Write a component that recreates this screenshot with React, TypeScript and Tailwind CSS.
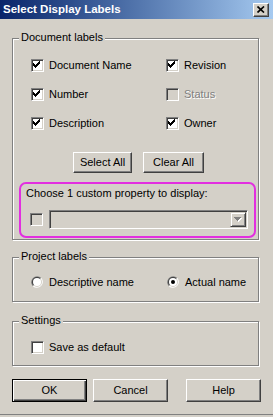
import type { ReactNode } from "react";

const face = "#d4d0c8";

function CheckMark() {
  return (
    <svg width="13" height="13" viewBox="0 0 13 13" className="absolute -left-[2px] -top-[2px]" shapeRendering="crispEdges">
      <path
        d="M3 5h1v3h-1z M4 6h1v3h-1z M5 7h1v3h-1z M6 6h1v3h-1z M7 5h1v3h-1z M8 4h1v3h-1z M9 3h1v3h-1z"
        fill="#000"
      />
    </svg>
  );
}

function Box({ checked, disabled }: { checked?: boolean; disabled?: boolean }) {
  return (
    <span
      className={`relative block w-[13px] h-[13px] shrink-0 border border-t-[#808080] border-l-[#808080] border-r-white border-b-white shadow-[inset_1px_1px_0_#404040,inset_-1px_-1px_0_#d4d0c8] ${
        disabled ? "bg-[#d4d0c8]" : "bg-white"
      }`}
    >
      {checked && <CheckMark />}
    </span>
  );
}

function Check({ label, checked, disabled }: { label: string; checked?: boolean; disabled?: boolean }) {
  return (
    <div className="flex items-center h-[13px] gap-[5px]">
      <Box checked={checked} disabled={disabled} />
      <span className={disabled ? "text-[#808080] [text-shadow:1px_1px_0_#fff]" : ""}>{label}</span>
    </div>
  );
}

function Radio({ label, checked }: { label: string; checked?: boolean }) {
  return (
    <div className="flex items-center h-[12px] gap-[6px]">
      <svg width="12" height="12" viewBox="0 0 12 12" className="shrink-0">
        <path d="M10.24 1.76A6 6 0 0 0 1.76 10.24Z" fill="#808080" />
        <path d="M10.24 1.76A6 6 0 0 1 1.76 10.24Z" fill="#fff" />
        <path d="M9.54 2.46A5 5 0 0 0 2.46 9.54Z" fill="#404040" />
        <path d="M9.54 2.46A5 5 0 0 1 2.46 9.54Z" fill={face} />
        <circle cx="6" cy="6" r="4" fill="#fff" />
        {checked && <circle cx="6" cy="6" r="2" fill="#000" />}
      </svg>
      <span>{label}</span>
    </div>
  );
}

function Group({ label, className, children }: { label: string; className: string; children: ReactNode }) {
  return (
    <div
      className={`relative ml-[12px] w-[247px] border border-[#808080] shadow-[inset_1px_1px_0_#fff,1px_1px_0_#fff] ${className}`}
    >
      <span className="absolute -top-[8px] left-[6px] bg-[#d4d0c8] px-[2px] leading-[13px]">{label}</span>
      {children}
    </div>
  );
}

function Btn({ label, className, isDefault }: { label: string; className: string; isDefault?: boolean }) {
  return (
    <button
      className={`flex items-center justify-center bg-[#d4d0c8] ${
        isDefault
          ? "border border-black shadow-[inset_1px_1px_0_#fff,inset_-1px_-1px_0_#404040,inset_-2px_-2px_0_#808080]"
          : "border border-t-white border-l-white border-r-[#404040] border-b-[#404040] shadow-[inset_-1px_-1px_0_#808080]"
      } ${className}`}
    >
      {label}
    </button>
  );
}

export default function App() {
  return (
    <div className="w-[273px] h-[417px] bg-[#d4d0c8] flex flex-col text-[11px] leading-[13px] text-black font-['Liberation_Sans',Arial,sans-serif] overflow-hidden">
      {/* title bar */}
      <div className="h-[19px] shrink-0 flex items-center pl-[3px] pr-[4px] bg-gradient-to-r from-[#0a246a] to-[#a6caf0]">
        <span className="text-white font-bold text-[11.5px] flex-1">Select Display Labels</span>
        <span className="w-[16px] h-[14px] flex items-center justify-center bg-[#d4d0c8] border border-t-white border-l-white border-r-[#404040] border-b-[#404040] shadow-[inset_-1px_-1px_0_#808080]">
          <svg width="8" height="7" viewBox="0 0 8 7">
            <path d="M0.5 0.5L7 6.5M7 0.5L0.5 6.5" stroke="#000" strokeWidth="1.7" />
          </svg>
        </span>
      </div>

      <Group label="Document labels" className="mt-[19px] h-[202px]">
        <div className="grid grid-cols-[135px_1fr] gap-y-[16px] pt-[20px] pl-[18px]">
          <Check label="Document Name" checked />
          <Check label="Revision" checked />
          <Check label="Number" checked />
          <Check label="Status" disabled />
          <Check label="Description" checked />
          <Check label="Owner" checked />
        </div>
        <div className="flex mt-[22px] ml-[60px] gap-[11px]">
          <Btn label="Select All" className="w-[59px] h-[21px]" />
          <Btn label="Clear All" className="w-[61px] h-[21px]" />
        </div>
        <div className="mt-[9px] ml-[6px] w-[237px] h-[56px] border-2 border-[#e22ee0] rounded-[7px] pl-[5px] pt-[3px]">
          <div>Choose 1 custom property to display:</div>
          <div className="flex items-center mt-[10px] ml-[4px] gap-[6px]">
            <Box disabled />
            <div className="w-[199px] h-[19px] flex justify-end items-center pr-[1px] border border-t-[#808080] border-l-[#808080] border-r-white border-b-white shadow-[inset_1px_1px_0_#404040,inset_-1px_-1px_0_#d4d0c8] bg-[#d4d0c8]">
              <span className="w-[16px] h-[15px] flex items-center justify-center border border-t-[#d4d0c8] border-l-[#d4d0c8] border-r-[#404040] border-b-[#404040] shadow-[inset_1px_1px_0_#fff,inset_-1px_-1px_0_#808080]">
                <svg width="8" height="5" viewBox="0 0 8 5" shapeRendering="crispEdges">
                  <path d="M1 1h7l-3.5 4z" fill="#fff" />
                  <path d="M0 0h7l-3.5 4z" fill="#808080" />
                </svg>
              </span>
            </div>
          </div>
        </div>
      </Group>

      <Group label="Project labels" className="mt-[17px] h-[45px]">
        <div className="grid grid-cols-[136px_1fr] pt-[18px] pl-[18px]">
          <Radio label="Descriptive name" />
          <Radio label="Actual name" checked />
        </div>
      </Group>

      <Group label="Settings" className="mt-[19px] h-[45px]">
        <div className="pt-[19px] pl-[18px]">
          <Check label="Save as default" />
        </div>
      </Group>

      <div className="flex mt-[13px] ml-[12px]">
        <Btn label="OK" isDefault className="w-[75px] h-[23px]" />
        <Btn label="Cancel" className="w-[75px] h-[23px] ml-[6px]" />
        <Btn label="Help" className="w-[75px] h-[23px] ml-[18px]" />
      </div>

      <div className="mt-auto mb-[2px] h-[1px] bg-[#808080]" />
    </div>
  );
}
